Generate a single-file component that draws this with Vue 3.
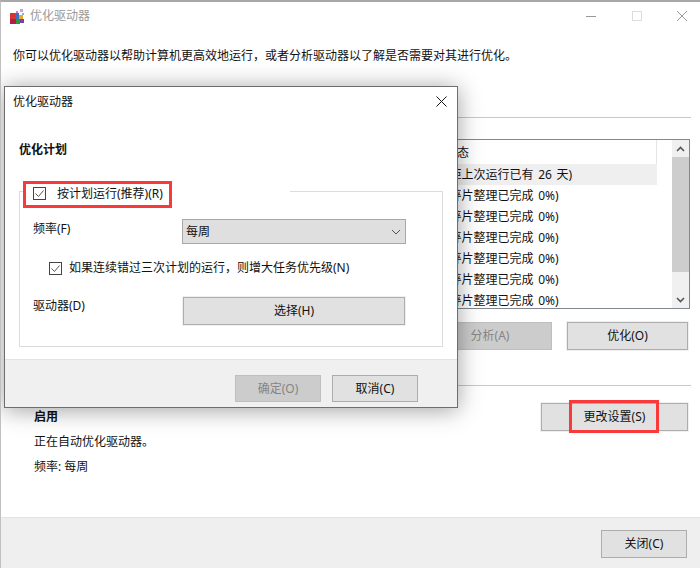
<script setup>
const statusRows = [
  '正常(距上次运行已有 26 天)',
  '正常(碎片整理已完成 0%)',
  '正常(碎片整理已完成 0%)',
  '正常(碎片整理已完成 0%)',
  '正常(碎片整理已完成 0%)',
  '正常(碎片整理已完成 0%)',
  '正常(碎片整理已完成 0%)'
]
</script>

<template>
  <div class="win">
    <header class="titlebar">
      <svg class="appicon" width="16" height="16" viewBox="0 0 16 16">
        <rect x="1" y="5" width="5" height="6" fill="#d8342c" />
        <rect x="1" y="11" width="6" height="5" fill="#b01f4a" />
        <rect x="6" y="5" width="4" height="6" fill="#3a6fc4" />
        <rect x="7" y="11" width="4" height="5" fill="#2c9a3e" />
        <rect x="10" y="7" width="4" height="4" fill="#e6a92e" />
        <rect x="11" y="11" width="4" height="4" fill="#7b3fa8" />
        <rect x="7" y="3" width="2" height="2" fill="#d877c8" />
        <rect x="11" y="1" width="3" height="3" fill="#c9a0e4" />
        <rect x="13" y="5" width="2" height="2" fill="#78b8e0" />
      </svg>
      <span class="wintitle">优化驱动器</span>
      <div class="caption">
        <svg width="12" height="12" viewBox="0 0 12 12"><path d="M1 6.5h10" stroke="#999" fill="none" /></svg>
        <svg width="12" height="12" viewBox="0 0 12 12"><rect x="1.5" y="1.5" width="9" height="9" stroke="#ddd" fill="none" /></svg>
        <svg width="12" height="12" viewBox="0 0 12 12"><path d="M1 1l10 10M11 1L1 11" stroke="#999" fill="none" /></svg>
      </div>
    </header>

    <main class="content">
      <p class="desc">你可以优化驱动器以帮助计算机更高效地运行，或者分析驱动器以了解是否需要对其进行优化。</p>
      <hr class="rule top" />
      <div class="list">
        <div class="rows">
          <div class="head"><span class="status">当前状态</span></div>
          <div v-for="(s, i) in statusRows" :key="i" class="row" :class="{ sel: i === 0 }">
            <span class="status">{{ s }}</span>
          </div>
        </div>
        <div class="scroll">
          <div class="sbtn">
            <svg width="9" height="6" viewBox="0 0 9 6"><path d="M1 5l3.5-3.5L8 5" stroke="#555" stroke-width="1.6" fill="none" /></svg>
          </div>
          <div class="thumb"></div>
          <div class="strack"></div>
          <div class="sbtn">
            <svg width="9" height="6" viewBox="0 0 9 6"><path d="M1 1l3.5 3.5L8 1" stroke="#555" stroke-width="1.6" fill="none" /></svg>
          </div>
        </div>
      </div>
      <div class="actions">
        <button class="btn disabled analyze">分析(A)</button>
        <button class="btn halo optimize">优化(O)</button>
      </div>
      <hr class="rule mid" />
      <section class="schedule">
        <div class="sched-text">
          <strong>启用</strong>
          <span>正在自动优化驱动器。</span>
          <span>频率: 每周</span>
        </div>
        <div class="change-wrap">
          <button class="btn halo change">更改设置(S)</button>
          <div class="mark change-mark"></div>
        </div>
      </section>
    </main>

    <footer class="winfoot">
      <button class="btn close">关闭(C)</button>
    </footer>

    <div class="dialog">
      <div class="dlg-head">
        <span class="dlg-name">优化驱动器</span>
        <svg width="11" height="11" viewBox="0 0 11 11"><path d="M.5.5l10 10M10.5.5l-10 10" stroke="#111" fill="none" /></svg>
      </div>
      <h2 class="dlg-title">优化计划</h2>
      <div class="group">
        <div class="legend">
          <svg class="cb" width="13" height="13" viewBox="0 0 13 13">
            <rect x=".5" y=".5" width="12" height="12" fill="#fff" stroke="#444" />
            <path d="M2.5 6.5l3 3 5-6" stroke="#555" fill="none" />
          </svg>
          <span class="legend-text">按计划运行(推荐)(R)</span>
        </div>
        <div class="mark legend-mark"></div>
        <div class="freq">
          <span class="lbl">频率(F)</span>
          <div class="select">
            <span>每周</span>
            <svg width="10" height="6" viewBox="0 0 10 6"><path d="M1 1l4 4 4-4" stroke="#555" fill="none" /></svg>
          </div>
        </div>
        <div class="raise">
          <svg class="cb" width="13" height="13" viewBox="0 0 13 13">
            <rect x=".5" y=".5" width="12" height="12" fill="#fff" stroke="#444" />
            <path d="M2.5 6.5l3 3 5-6" stroke="#555" fill="none" />
          </svg>
          <span>如果连续错过三次计划的运行，则增大任务优先级(N)</span>
        </div>
        <div class="drives">
          <span class="lbl drive-lbl">驱动器(D)</span>
          <button class="btn halo pick">选择(H)</button>
        </div>
      </div>
      <div class="dlg-foot">
        <button class="btn disabled dlg-btn">确定(O)</button>
        <button class="btn dlg-btn">取消(C)</button>
      </div>
    </div>
  </div>
</template>

<style>
html, body { margin: 0; background: #fff; }
</style>

<style scoped>
.win {
  position: relative;
  width: 700px;
  height: 568px;
  box-sizing: border-box;
  overflow: hidden;
  display: flex;
  flex-direction: column;
  background: #fff;
  border-top: 2px solid #a8a8a8;
  border-left: 1px solid #c0c0c0;
  font: 12px/20px "Noto Sans", "Noto Sans CJK SC", sans-serif;
  color: #111;
}
.titlebar {
  height: 28px;
  flex: none;
  display: flex;
  align-items: center;
  padding-left: 8px;
}
.appicon { flex: none; }
.wintitle { margin-left: 5px; color: #9a9a9a; }
.caption {
  margin-left: auto;
  width: 103px;
  margin-right: 12px;
  display: flex;
  justify-content: space-between;
}
.content {
  flex: 1;
  min-height: 0;
  padding: 16px 9px 0 12px;
  display: flex;
  flex-direction: column;
}
.desc { margin: 0; height: 20px; }
.rule { border: 0; height: 1px; background: #c8c8c8; margin: 0; flex: none; }
.rule.top { margin-top: 51px; }
.list {
  margin: 21px 1px 0 0;
  height: 170px;
  box-sizing: border-box;
  flex: none;
  border: 1px solid #828790;
  display: flex;
  overflow: hidden;
}
.rows { width: 643px; flex: none; overflow: hidden; }
.head {
  height: 24px;
  line-height: 26px;
  border-right: 1px solid #e5e5e5;
  box-sizing: border-box;
}
.row { height: 21px; line-height: 21px; }
.row.sel { background: #efefef; }
.status { margin-left: 408px; white-space: nowrap; word-spacing: 1.5px; }
.head .status { margin-left: 407px; }
.scroll {
  margin-left: auto;
  width: 17px;
  flex: none;
  background: #f0f0f0;
  display: flex;
  flex-direction: column;
}
.sbtn {
  height: 17px;
  flex: none;
  display: flex;
  align-items: center;
  justify-content: center;
}
.thumb { height: 115px; flex: none; background: #cdcdcd; }
.strack { flex: 1; }
.btn {
  box-sizing: border-box;
  margin: 0;
  padding: 0;
  background: #e1e1e1;
  border: 1px solid #adadad;
  font: inherit;
  color: #111;
}
.halo { box-shadow: 0 0 0 1px #f0f0f0; }
.disabled { background: #cccccc; border-color: #bfbfbf; color: #858585; }
.actions {
  margin: 13px 3px 0 0;
  display: flex;
  justify-content: flex-end;
  gap: 15px;
}
.analyze { width: 124px; height: 28px; }
.optimize { width: 121px; height: 28px; }
.rule.mid { margin-top: 35px; }
.schedule {
  margin: 17px 3px 0 0;
  display: flex;
  justify-content: space-between;
  align-items: flex-start;
}
.sched-text {
  padding: 4px 0 0 21px;
  display: flex;
  flex-direction: column;
  gap: 5px;
}
.change-wrap { position: relative; }
.change { display: block; width: 147px; height: 28px; }
.mark {
  position: absolute;
  box-sizing: border-box;
  border: 3px solid #f93a3a;
  pointer-events: none;
}
.change-mark { left: 28px; top: -3px; width: 90px; height: 33px; }
.winfoot {
  height: 51px;
  flex: none;
  box-sizing: border-box;
  border-top: 1px solid #e3e3e3;
  background: #efefef;
  display: flex;
  justify-content: flex-end;
  padding: 12px 13px 0 0;
}
.close { width: 86px; height: 28px; }
.dialog {
  position: absolute;
  left: 3px;
  top: 84px;
  width: 454px;
  height: 322px;
  box-sizing: border-box;
  border: 1px solid #6e6e6e;
  background: #fff;
  box-shadow: 0 2px 22px rgba(0, 0, 0, 0.38);
  display: flex;
  flex-direction: column;
}
.dlg-head {
  height: 28px;
  flex: none;
  display: flex;
  align-items: center;
  justify-content: space-between;
  padding: 0 10px 0 8px;
}
.dlg-name { padding-top: 2px; }
.dlg-title {
  margin: 25px 0 0 14px;
  font-size: 12px;
  line-height: 20px;
  font-weight: 700;
}
.group {
  position: relative;
  margin: 31px 0 12px 14px;
  width: 424px;
  height: 156px;
  flex: none;
  box-sizing: border-box;
  border: 1px solid #dcdcdc;
  padding-top: 27px;
}
.legend {
  position: absolute;
  left: 6px;
  top: -11px;
  width: 264px;
  height: 24px;
  box-sizing: border-box;
  padding-left: 7px;
  background: #fff;
  display: flex;
  align-items: center;
  gap: 11px;
}
.legend-text { padding-top: 2px; }
.cb { flex: none; }
.legend-mark { left: 3px; top: -11px; width: 149px; height: 27px; }
.freq { display: flex; padding-left: 13px; }
.lbl { width: 149px; flex: none; }
.select {
  width: 224px;
  height: 25px;
  box-sizing: border-box;
  border: 1px solid #a8a8a8;
  background: #dfdfdf;
  display: flex;
  align-items: center;
  justify-content: space-between;
  padding: 0 4px 0 3px;
}
.raise {
  margin-top: 14px;
  padding-left: 29px;
  display: flex;
  align-items: center;
  gap: 7px;
}
.drives { margin-top: 19px; display: flex; padding-left: 13px; }
.drive-lbl { width: 150px; margin-top: -1px; }
.pick { width: 222px; height: 28px; }
.dlg-foot {
  flex: 1;
  box-sizing: border-box;
  border-top: 1px solid #e3e3e3;
  background: #f0f0f0;
  display: flex;
  justify-content: flex-end;
  align-items: flex-start;
  gap: 11px;
  padding: 15px 39px 0 0;
}
.dlg-btn { width: 86px; height: 27px; }
</style>
